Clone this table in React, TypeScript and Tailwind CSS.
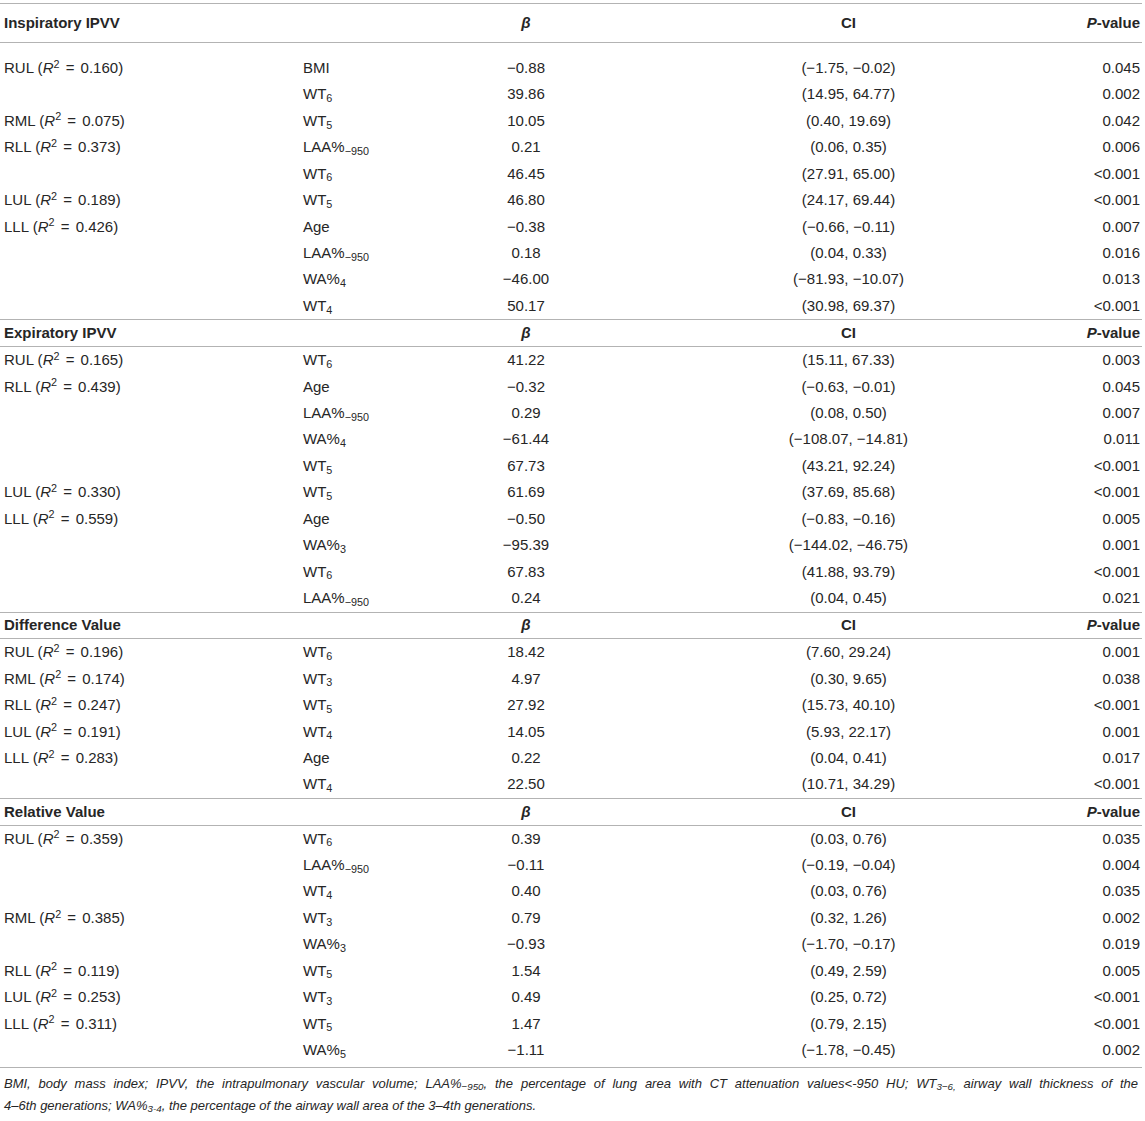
import React from "react";

type Row = [string | null, string | null, string, string, string, string];

const sections: { title: string; rows: Row[] }[] = [
  {
    title: "Inspiratory IPVV",
    rows: [
      ["RUL", "0.160", "BMI", "−0.88", "(−1.75, −0.02)", "0.045"],
      [null, null, "WT|6", "39.86", "(14.95, 64.77)", "0.002"],
      ["RML", "0.075", "WT|5", "10.05", "(0.40, 19.69)", "0.042"],
      ["RLL", "0.373", "LAA%|−950", "0.21", "(0.06, 0.35)", "0.006"],
      [null, null, "WT|6", "46.45", "(27.91, 65.00)", "<0.001"],
      ["LUL", "0.189", "WT|5", "46.80", "(24.17, 69.44)", "<0.001"],
      ["LLL", "0.426", "Age", "−0.38", "(−0.66, −0.11)", "0.007"],
      [null, null, "LAA%|−950", "0.18", "(0.04, 0.33)", "0.016"],
      [null, null, "WA%|4", "−46.00", "(−81.93, −10.07)", "0.013"],
      [null, null, "WT|4", "50.17", "(30.98, 69.37)", "<0.001"],
    ],
  },
  {
    title: "Expiratory IPVV",
    rows: [
      ["RUL", "0.165", "WT|6", "41.22", "(15.11, 67.33)", "0.003"],
      ["RLL", "0.439", "Age", "−0.32", "(−0.63, −0.01)", "0.045"],
      [null, null, "LAA%|−950", "0.29", "(0.08, 0.50)", "0.007"],
      [null, null, "WA%|4", "−61.44", "(−108.07, −14.81)", "0.011"],
      [null, null, "WT|5", "67.73", "(43.21, 92.24)", "<0.001"],
      ["LUL", "0.330", "WT|5", "61.69", "(37.69, 85.68)", "<0.001"],
      ["LLL", "0.559", "Age", "−0.50", "(−0.83, −0.16)", "0.005"],
      [null, null, "WA%|3", "−95.39", "(−144.02, −46.75)", "0.001"],
      [null, null, "WT|6", "67.83", "(41.88, 93.79)", "<0.001"],
      [null, null, "LAA%|−950", "0.24", "(0.04, 0.45)", "0.021"],
    ],
  },
  {
    title: "Difference Value",
    rows: [
      ["RUL", "0.196", "WT|6", "18.42", "(7.60, 29.24)", "0.001"],
      ["RML", "0.174", "WT|3", "4.97", "(0.30, 9.65)", "0.038"],
      ["RLL", "0.247", "WT|5", "27.92", "(15.73, 40.10)", "<0.001"],
      ["LUL", "0.191", "WT|4", "14.05", "(5.93, 22.17)", "0.001"],
      ["LLL", "0.283", "Age", "0.22", "(0.04, 0.41)", "0.017"],
      [null, null, "WT|4", "22.50", "(10.71, 34.29)", "<0.001"],
    ],
  },
  {
    title: "Relative Value",
    rows: [
      ["RUL", "0.359", "WT|6", "0.39", "(0.03, 0.76)", "0.035"],
      [null, null, "LAA%|−950", "−0.11", "(−0.19, −0.04)", "0.004"],
      [null, null, "WT|4", "0.40", "(0.03, 0.76)", "0.035"],
      ["RML", "0.385", "WT|3", "0.79", "(0.32, 1.26)", "0.002"],
      [null, null, "WA%|3", "−0.93", "(−1.70, −0.17)", "0.019"],
      ["RLL", "0.119", "WT|5", "1.54", "(0.49, 2.59)", "0.005"],
      ["LUL", "0.253", "WT|3", "0.49", "(0.25, 0.72)", "<0.001"],
      ["LLL", "0.311", "WT|5", "1.47", "(0.79, 2.15)", "<0.001"],
      [null, null, "WA%|5", "−1.11", "(−1.78, −0.45)", "0.002"],
    ],
  },
];

const cols = "grid grid-cols-[299px_130px_194px_451px_1fr] items-center";

function Variable({ v }: { v: string }) {
  const [base, sub] = v.split("|");
  return (
    <span>
      {base}
      {sub && <sub className="text-[0.72em]">{sub}</sub>}
    </span>
  );
}

function Header({ title, first }: { title: string; first: boolean }) {
  return (
    <div
      className={`${cols} border-y border-[#b3b3b3] font-bold ${
        first ? "h-[40px]" : "h-[27.75px]"
      }`}
    >
      <div className="pl-1">{title}</div>
      <div />
      <div className="text-center italic">β</div>
      <div className="text-center">CI</div>
      <div className="pr-0.5 text-right">
        <span className="italic">P</span>-value
      </div>
    </div>
  );
}

export default function App() {
  return (
    <div className="w-[1142px] bg-white pt-[3px] font-['Liberation_Sans',Arial,sans-serif] text-[15px] text-[#262626]">
      {sections.map((s, i) => (
        <section key={s.title}>
          <Header title={s.title} first={i === 0} />
          <div className={i === 0 ? "pt-[12px]" : ""}>
            {s.rows.map((r, j) => (
              <div key={j} className={`${cols} h-[26.45px]`}>
                <div className="pl-1">
                  {r[0] && (
                    <>
                      {r[0]} (<span className="italic">R</span>
                      <sup className="text-[0.72em]">2</sup>
                      <span className="mx-[2px]"> = </span>
                      {r[1]})
                    </>
                  )}
                </div>
                <div className="pl-1">
                  <Variable v={r[2]} />
                </div>
                <div className="text-center">{r[3]}</div>
                <div className="text-center">{r[4]}</div>
                <div className="pr-0.5 text-right">{r[5]}</div>
              </div>
            ))}
          </div>
        </section>
      ))}
      <div className="mt-[3px] border-t border-[#b3b3b3] pt-[5px] pl-1 pr-1 text-[13px] leading-[22px] italic">
        <div className="text-justify [text-align-last:justify]">
          BMI, body mass index; IPVV, the intrapulmonary vascular volume; LAA%<sub>−950</sub>, the percentage of lung
          area with CT attenuation values&lt;-950 HU; WT<sub>3−6,</sub> airway wall thickness of the
        </div>
        <div>
          4–6th generations; WA%<sub>3-4</sub>, the percentage of the airway wall area of the 3–4th generations.
        </div>
      </div>
    </div>
  );
}
